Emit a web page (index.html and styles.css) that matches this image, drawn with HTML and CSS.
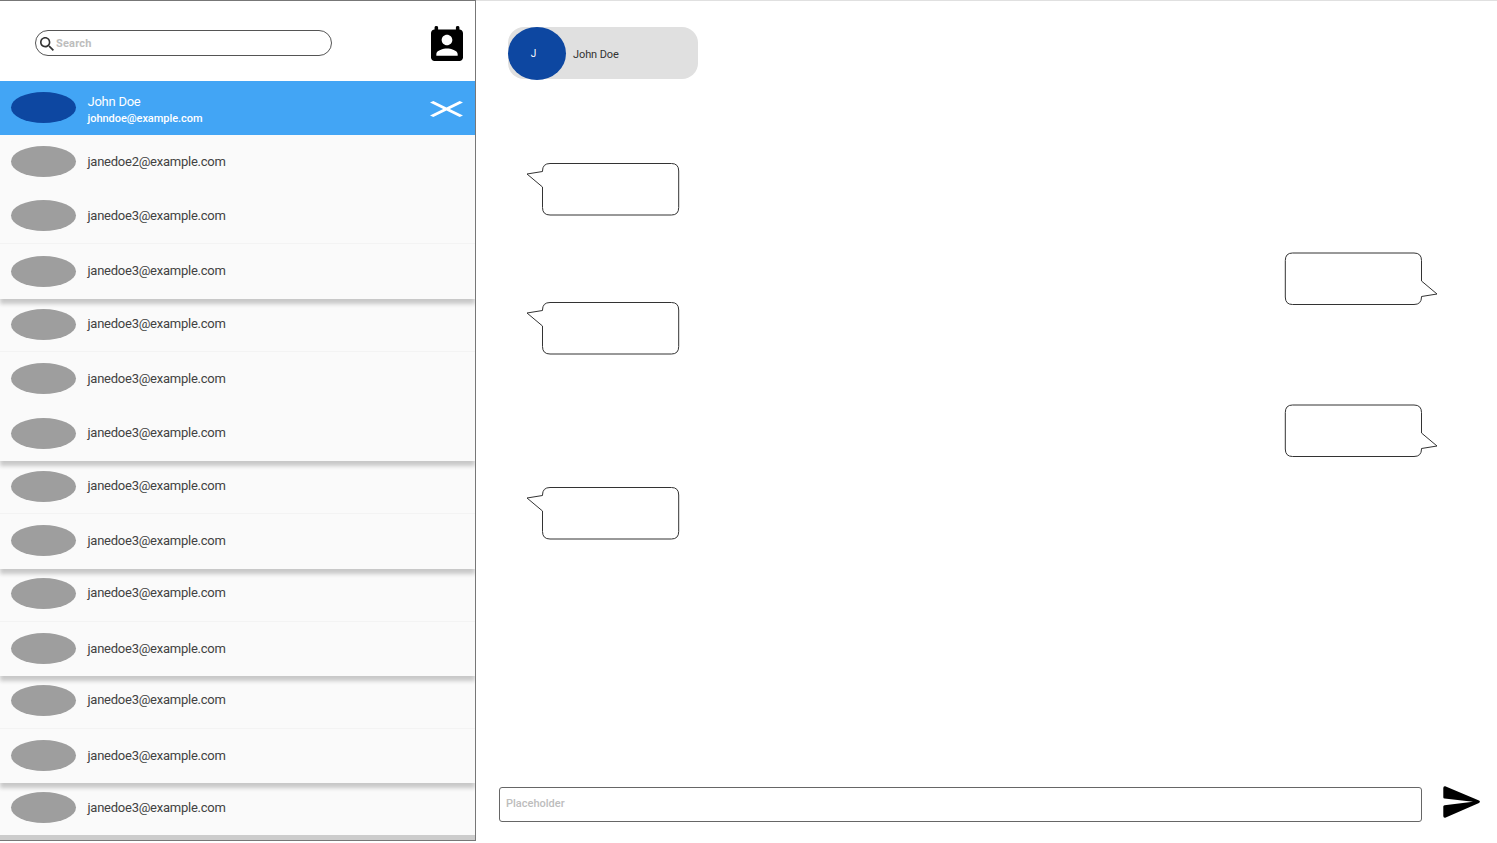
FILE: index.html
```html
<!DOCTYPE html>
<html lang="en">
<head>
<meta charset="utf-8">
<title>Messages</title>
<link rel="stylesheet" href="styles.css">
</head>
<body>
<svg width="0" height="0" class="defs">
  <defs>
    <symbol id="bubble" viewBox="0 0 154 54">
      <path d="M24 1.500H145.500Q152.700 1.500 152.700 9V45.500Q152.700 53 145.500 53H24Q16.500 53 16.500 45.500V25L1 12L16.500 9.500V9Q16.500 1.500 24 1.500Z" fill="#fff" stroke="#333" stroke-width="1"/>
    </symbol>
  </defs>
</svg>
<div class="app">
  <aside class="sidebar">
    <header class="top">
      <div class="search">
        <svg class="search-icon" viewBox="3 3 17.500 17.500"><path fill="#333" d="M15.500 14h-.79l-.28-.27C15.410 12.590 16 11.110 16 9.500 16 5.910 13.090 3 9.500 3S3 5.910 3 9.500 5.910 16 9.500 16c1.610 0 3.090-.59 4.230-1.570l.27.28v.79l5 4.990L20.490 19l-4.990-5zm-6 0C7.010 14 5 11.990 5 9.500S7.010 5 9.500 5 14 7.010 14 9.500 11.990 14 9.500 14z"/></svg>
        <span>Search</span>
      </div>
      <svg class="contacts" viewBox="3 1 18 20" preserveAspectRatio="none"><path d="M19 3V1.800Q19 1 18 1T17 1.800V3H7V1.800Q7 1 6 1T5 1.800V3c-1.110 0-2 .9-2 2v14c0 1.100.89 2 2 2h14c1.100 0 2-.9 2-2V5c0-1.100-.9-2-2-2zm-7 3c1.660 0 3 1.340 3 3s-1.340 3-3 3-3-1.340-3-3 1.340-3 3-3zm6 12H6v-1c0-2 4-3.100 6-3.100s6 1.100 6 3.100v1z"/></svg>
    </header>
    <section class="group first">
      <div class="row active">
        <i class="avatar"></i>
        <div class="who"><b>John Doe</b><small>johndoe@example.com</small></div>
        <svg class="close" viewBox="5 5 14 14" preserveAspectRatio="none"><path fill="#fff" d="M19 6.410L17.590 5 12 10.590 6.410 5 5 6.410 10.590 12 5 17.590 6.410 19 12 13.410 17.590 19 19 17.590 13.410 12z"/></svg>
      </div>
      <div class="row"><i class="avatar"></i><span>janedoe2@example.com</span></div>
      <div class="row"><i class="avatar"></i><span>janedoe3@example.com</span></div>
      <div class="row line tall"><i class="avatar"></i><span>janedoe3@example.com</span></div>
    </section>
    <section class="group second">
      <div class="row"><i class="avatar"></i><span>janedoe3@example.com</span></div>
      <div class="row line tall"><i class="avatar"></i><span>janedoe3@example.com</span></div>
      <div class="row"><i class="avatar"></i><span>janedoe3@example.com</span></div>
    </section>
    <section class="group third">
      <div class="row"><i class="avatar"></i><span>janedoe3@example.com</span></div>
      <div class="row line tall"><i class="avatar"></i><span>janedoe3@example.com</span></div>
    </section>
    <section class="group fourth">
      <div class="row"><i class="avatar"></i><span>janedoe3@example.com</span></div>
      <div class="row line tall"><i class="avatar"></i><span>janedoe3@example.com</span></div>
    </section>
    <section class="group fifth">
      <div class="row"><i class="avatar"></i><span>janedoe3@example.com</span></div>
      <div class="row line tall"><i class="avatar"></i><span>janedoe3@example.com</span></div>
    </section>
    <section class="group sixth">
      <div class="row"><i class="avatar"></i><span>janedoe3@example.com</span></div>
    </section>
  </aside>
  <main class="chat">
    <div class="chip"><span class="initial">J</span><span class="name">John Doe</span></div>
    <div class="thread">
      <svg class="bubble in"><use href="#bubble"/></svg>
      <svg class="bubble out"><use href="#bubble"/></svg>
      <svg class="bubble in near"><use href="#bubble"/></svg>
      <svg class="bubble out later"><use href="#bubble"/></svg>
      <svg class="bubble in last"><use href="#bubble"/></svg>
    </div>
    <footer class="composer">
      <div class="field">Placeholder</div>
      <svg class="send" viewBox="0 0 37 32"><path d="M2.200.3L36 14.600Q37.800 15.800 36 17L2.200 31.700Q.3 32 .3 30V20.500Q.3 19.400 1.500 19.200L30 15.800L1.500 12.600Q.3 12.400.3 11.300V2Q.3 0 2.200.3Z"/></svg>
    </footer>
  </main>
</div>
</body>
</html>
```

FILE: styles.css
```css
* { box-sizing: border-box; }
body { margin: 0; background: #fff; font-family: Roboto, sans-serif; color: #333; overflow: hidden; }
.defs { position: absolute; }
.app { display: flex; height: 843px; }
.sidebar { width: 476px; height: 841px; border: solid #777; border-width: 1px 1px 1px 0; background: #ccc; overflow: hidden; }
.top { height: 80px; background: #fff; display: flex; justify-content: space-between; align-items: flex-start; padding: 25px 12px 0 35px; }
.search { width: 297px; height: 26px; margin-top: 4px; border: 1px solid #555; border-radius: 13px; display: flex; align-items: center; padding-left: 4px; gap: 2px; font-size: 11px; font-weight: 700; color: #bdbdbd; letter-spacing: .2px; }
.search-icon { width: 14px; height: 14px; margin-top: 1px; }
.contacts { width: 32px; height: 35px; }
.group { position: relative; background: #fafafa; box-shadow: 0 5px 4px #c8c8c8; }
.first { z-index: 6; }
.second { z-index: 5; }
.third { z-index: 4; }
.fourth { z-index: 3; }
.fifth { z-index: 2; }
.sixth { z-index: 1; box-shadow: none; }
.row { height: 54px; display: flex; align-items: center; padding: 0 0 1px 11px; gap: 12px; font-size: 13px; letter-spacing: -.25px; color: #424242; }
.row span { margin: -1px 0 0 -.5px; }
.row.tall { height: 55px; }
.row.line { border-top: 1px solid #f3f3f3; }
.group + .group .row:first-child { height: 52px; padding-bottom: 2px; }
.second .row:last-child { height: 55px; }
.third .row:last-child { height: 56px; padding-bottom: 2px; }
.group.fourth .row:first-child, .group.fifth .row:first-child { padding-bottom: 4px; height: 52px; }
.group.sixth .row:first-child { height: 52px; padding-bottom: 3px; }
.first .tall { height: 56px; }
.avatar { width: 65px; height: 31px; border-radius: 50%; background: #9e9e9e; flex: none; }
.active { background: #42a5f5; color: #fff; padding-right: 12px; }
.active .avatar { background: #0d47a1; }
.who { display: flex; flex-direction: column; flex: 1; gap: 3px; padding-top: 4px; margin-left: -.5px; }
.who b { font-weight: 400; line-height: 15px; }
.who small { font-size: 11px; line-height: 14px; font-weight: 500; letter-spacing: -.05px; }
.close { width: 33px; height: 16px; margin-top: 2px; }
.chat { flex: 1; height: 843px; border-top: 1px solid #e0e0e0; padding: 26px 17px 21px 23px; display: flex; flex-direction: column; }
.chip { width: 190px; height: 52px; margin-left: 9px; border-radius: 16px; background: #e0e0e0; display: flex; align-items: center; gap: 7px; font-size: 11px; flex: none; }
.name { padding-top: 2px; letter-spacing: -.1px; }
.initial { width: 58px; height: 53px; margin-bottom: -1px; border-radius: 50%; background: #0d47a1; color: #fff; font-size: 10px; display: flex; align-items: center; justify-content: center; padding: 0 7px 1px 0; }
.thread { flex: 1; display: flex; flex-direction: column; padding: 83px 42px 0 27px; }
.bubble { width: 154px; height: 54px; flex: none; }
.out { align-self: flex-end; transform: rotate(180deg); margin-top: 36px; }
.near { margin-top: -5px; }
.later { margin-top: 49px; }
.last { margin-top: 28px; }
.composer { display: flex; justify-content: space-between; align-items: flex-start; height: 35px; }
.field { width: 923px; height: 35px; border: 1px solid #666; border-radius: 3px; padding: 9px 6px; font: 500 11px/13px Roboto, sans-serif; color: #bdbdbd; }
.send { width: 37px; height: 32px; margin-top: -1px; }
```
